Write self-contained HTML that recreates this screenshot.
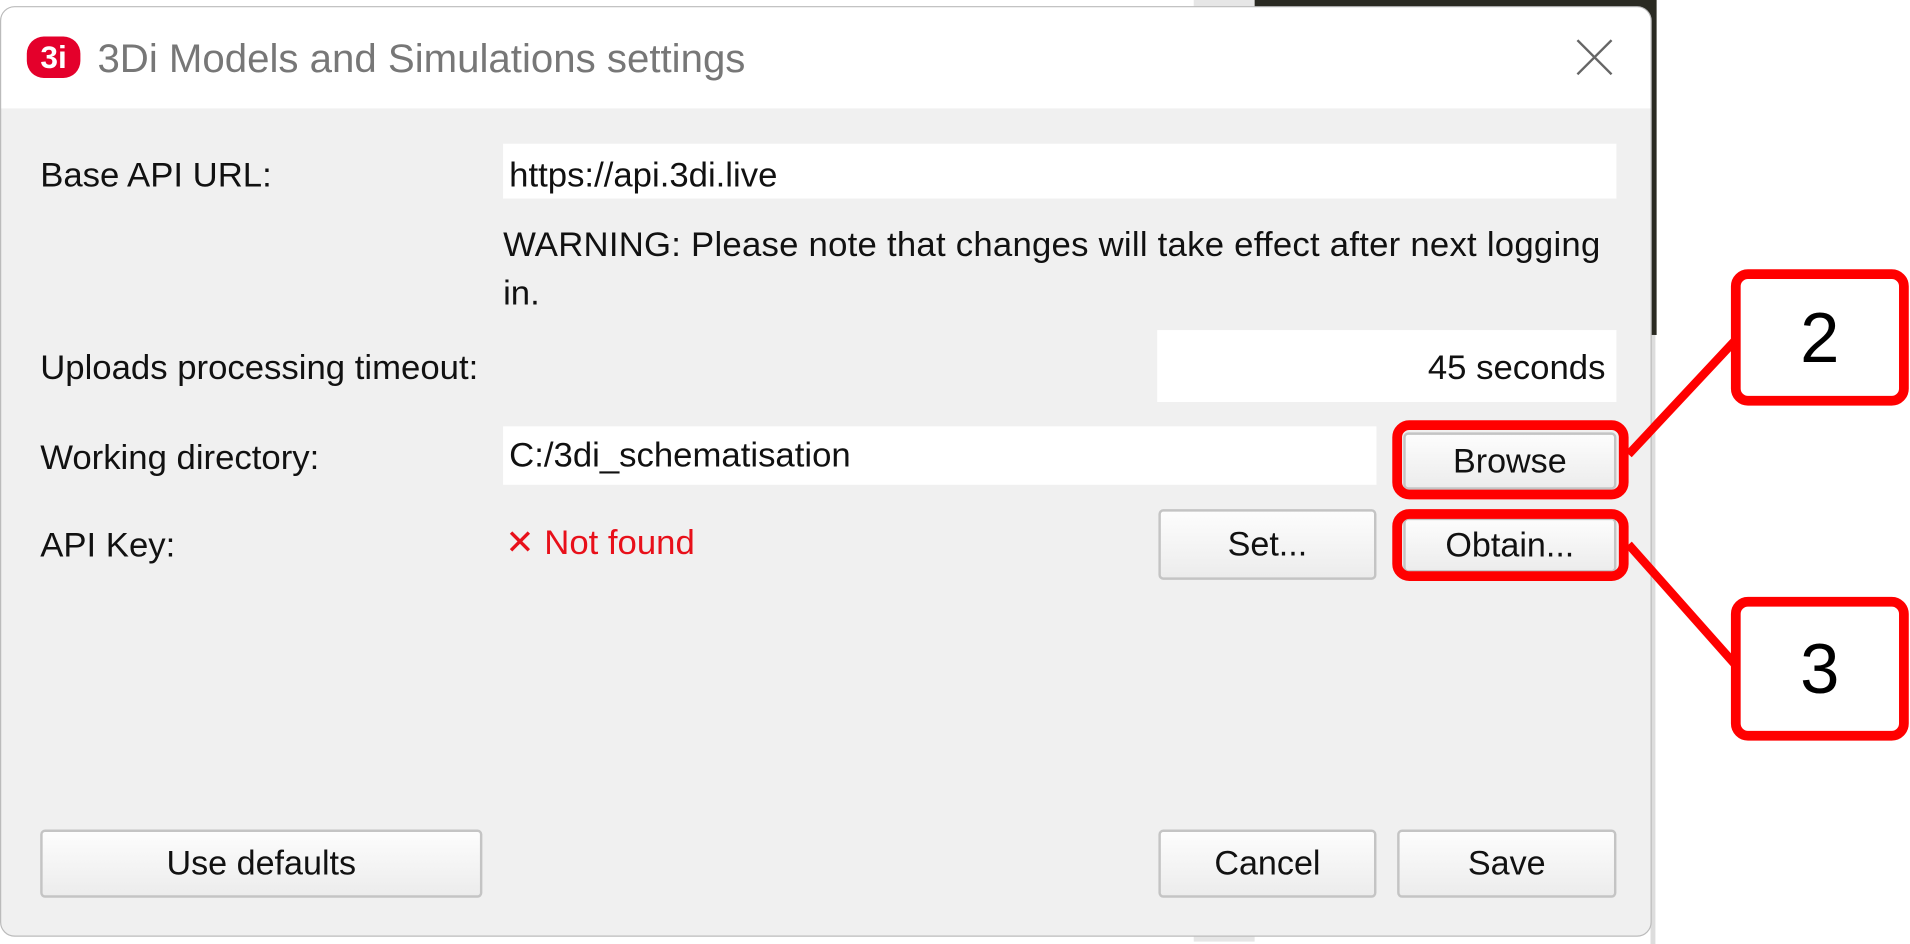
<!DOCTYPE html>
<html><head><meta charset="utf-8"><style>
*{margin:0;padding:0;box-sizing:border-box}
html,body{width:1910px;height:941px;overflow:hidden;background:#fff;font-family:"Liberation Sans",sans-serif}
#s{position:absolute;left:0;top:0;width:1568px;height:773px;transform:scale(1.2181);transform-origin:0 0}
.a{position:absolute}
.t{position:absolute;font-size:28.5px;color:#111;white-space:nowrap;line-height:1}
.in{position:absolute;background:#fff}
.btn{position:absolute;background:linear-gradient(#fdfdfd,#ececec);border:2px solid #c4c4c4;border-radius:4px;font-size:28px;color:#111;display:flex;align-items:center;justify-content:center}
.rb{position:absolute;border:8px solid #f00;border-radius:14px}
</style></head><body><div id="s">
<div class="a" style="left:980px;top:0;width:50px;height:773px;background:#e6e6e6"></div>
<div class="a" style="left:1030px;top:0;width:330px;height:275px;background:#2a2a22"></div>
<div class="a" style="left:1355px;top:275px;width:4px;height:500px;background:#ddd"></div>
<div class="a" style="left:0;top:5px;width:1356px;height:764px;background:#f0f0f0;border:1px solid #bbb;border-radius:12px;overflow:hidden">
 <div class="a" style="left:0;top:0;width:1356px;height:83px;background:#fff"></div>
</div>
<div class="a" style="left:22px;top:30px;width:44px;height:34px;background:#e4002b;border-radius:14px;color:#fff;font-weight:bold;font-size:26px;line-height:34px;text-align:center">3i</div>
<div class="t" style="left:80px;top:31px;font-size:33px;color:#777">3Di Models and Simulations settings</div>
<svg class="a" style="left:1294px;top:32px" width="30" height="30"><path d="M1 1L29 29M29 1L1 29" stroke="#666" stroke-width="2"/></svg>
<div class="t" style="left:33px;top:130px">Base API URL:</div>
<div class="in" style="left:413px;top:118px;width:914px;height:45px"></div>
<div class="t" style="left:418px;top:130px">https://api.3di.live</div>
<div class="t" style="left:413px;top:187px;letter-spacing:0.2px">WARNING: Please note that changes will take effect after next logging</div>
<div class="t" style="left:413px;top:227px">in.</div>
<div class="t" style="left:33px;top:288px">Uploads processing timeout:</div>
<div class="in" style="left:950px;top:271px;width:377px;height:59px"></div>
<div class="t" style="left:950px;top:288px;width:368px;text-align:right">45 seconds</div>
<div class="t" style="left:33px;top:362px">Working directory:</div>
<div class="in" style="left:413px;top:350px;width:717px;height:48px"></div>
<div class="t" style="left:418px;top:360px">C:/3di_schematisation</div>
<div class="btn" style="left:1152px;top:355px;width:175px;height:47px">Browse</div>
<div class="t" style="left:33px;top:434px">API Key:</div>
<div class="t" style="left:415px;top:432px;color:#e8101a">✕ Not found</div>
<div class="btn" style="left:951px;top:418px;width:179px;height:58px">Set...</div>
<div class="btn" style="left:1152px;top:425px;width:175px;height:45px">Obtain...</div>
<div class="btn" style="left:33px;top:681px;width:363px;height:56px">Use defaults</div>
<div class="btn" style="left:951px;top:681px;width:179px;height:56px">Cancel</div>
<div class="btn" style="left:1147px;top:681px;width:180px;height:56px">Save</div>
<div class="rb" style="left:1143px;top:345px;width:194px;height:65px"></div>
<div class="rb" style="left:1143px;top:418px;width:194px;height:59px"></div>
<svg class="a" style="left:0;top:0" width="1568" height="773"><path d="M1337 373L1424 280M1337 447L1424 545" stroke="#f00" stroke-width="7"/></svg>
<div class="rb" style="left:1421px;top:221px;width:146px;height:112px;background:#fff;display:flex;align-items:center;justify-content:center;font-size:58px;color:#000">2</div>
<div class="rb" style="left:1421px;top:490px;width:146px;height:118px;background:#fff;display:flex;align-items:center;justify-content:center;font-size:58px;color:#000">3</div>
</div></body></html>
